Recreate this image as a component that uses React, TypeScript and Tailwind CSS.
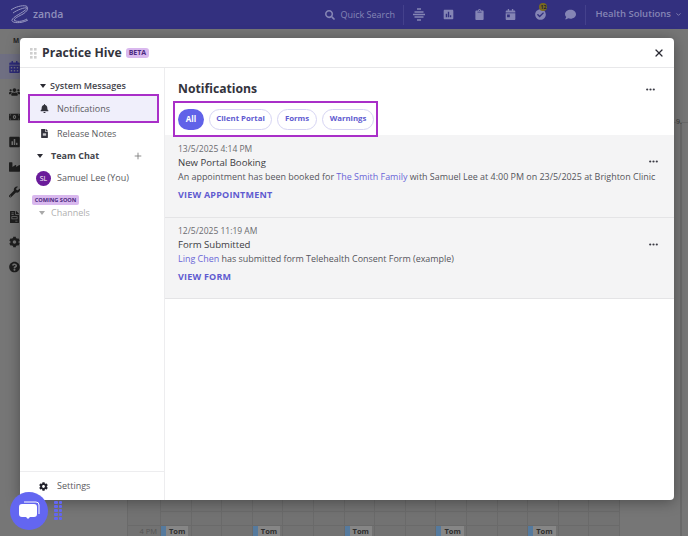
import React from "react";
import { Plus, X, ChevronDown } from "lucide-react";
import {
  FaSearch, FaBell, FaFileAlt, FaCog, FaCalendarAlt, FaUsers, FaMoneyBillAlt, FaPoll, FaIndustry, FaWrench,
  FaQuestionCircle, FaClipboard, FaCalendarDay, FaCheckCircle, FaComment, FaFileInvoice,
} from "react-icons/fa";

const font = { fontFamily: '"Open Sans", sans-serif' };

function Caret({ light }: { light?: boolean }) {
  return (
    <svg width="6" height="4" viewBox="0 0 6 4" className="shrink-0">
      <path d="M0 0h6L3 4z" fill={light ? "#a9a9a9" : "#2b2b33"} />
    </svg>
  );
}

function Dots() {
  return (
    <svg width="9" height="3" viewBox="0 0 9 3">
      <circle cx="1.2" cy="1.5" r="1.1" fill="#3a3a44" />
      <circle cx="4.5" cy="1.5" r="1.1" fill="#3a3a44" />
      <circle cx="7.8" cy="1.5" r="1.1" fill="#3a3a44" />
    </svg>
  );
}

function Grip() {
  return (
    <svg width="7" height="11" viewBox="0 0 7 11" fill="#cfcfcf">
      <rect x="0" y="0" width="2.6" height="2.6" />
      <rect x="4" y="0" width="2.6" height="2.6" />
      <rect x="0" y="4" width="2.6" height="2.6" />
      <rect x="4" y="4" width="2.6" height="2.6" />
      <rect x="0" y="8" width="2.6" height="2.6" />
      <rect x="4" y="8" width="2.6" height="2.6" />
    </svg>
  );
}

function Pill({ label, active, width }: { label: string; active?: boolean; width: string }) {
  return (
    <div
      className={
        (active
          ? "bg-[#6062e8] text-white text-[8px] "
          : "border border-[#d6d4f3] bg-white text-[#5f5bd0] text-[7.8px] ") +
        "h-[21px] rounded-full font-bold flex items-center justify-center whitespace-nowrap shrink-0 " +
        width
      }
    >
      {label}
    </div>
  );
}

function Notice({ time, title, body, action, box }: { time: string; title: string; body: React.ReactNode; action: string; box: string }) {
  return (
    <div className={"relative bg-[#f4f4f5] border-b border-[#e4e4e6] pl-[13px] " + box}>
      <div className="text-[8.5px] leading-[13px] text-[#6b6b70]">{time}</div>
      <div className="text-[9.6px] leading-[15px] text-[#3c3c42]">{title}</div>
      <div className="text-[8.95px] leading-[13px] text-[#55555b] whitespace-nowrap">{body}</div>
      <div className="text-[9px] leading-[13px] mt-[5px] font-bold tracking-[0.2px] text-[#5f5bd0]">{action}</div>
      <div className="absolute right-[16px] top-[25px] flex">
        <Dots />
      </div>
    </div>
  );
}

function NavIcon({ children }: { children: React.ReactNode }) {
  return <div className="h-[25px] flex items-center pl-[9px] text-[#1f1f1f]">{children}</div>;
}

export default function App() {
  return (
    <div style={font} className="relative w-[688px] h-[536px] overflow-hidden bg-[#767676]">
      <header className="h-[29px] bg-[#33307f] flex items-center text-[#8585b5]">
        <svg width="24" height="22" viewBox="0 0 24 22" className="ml-[8px]" fill="none" stroke="#9898c2" strokeWidth="1">
          <path d="M3 6c4-3 11-5 15-4 3 1 1 3-2 5-4 3-11 6-12 9-1 3 9 4 16 0" />
          <path d="M5 9c4-3 12-6 14-5 2 1-1 4-4 6-4 2-8 4-9 6 2 2 8 2 13-1" />
        </svg>
        <span className="ml-[1px] text-[10.5px] font-semibold text-[#8f8fbb]">zanda</span>
        <div className="ml-auto flex items-center">
          <FaSearch size={10} />
          <span className="text-[9px] ml-[5px] w-[54px] whitespace-nowrap">Quick Search</span>
          <div className="w-px h-[20px] bg-[#44418c] ml-[9px]" />
          <svg width="12" height="13" viewBox="0 0 12 13" className="ml-[9px]" fill="none" stroke="#8585b5" strokeWidth="1.3">
            <path d="M4 1h4M1.5 4h9M0 6.5h12M1.5 9h9M4 12h4" />
          </svg>
          <span className="ml-[18px]"><FaPoll size={11} /></span>
          <span className="ml-[20px]"><FaClipboard size={11} /></span>
          <span className="ml-[20px]"><FaCalendarDay size={11} /></span>
          <div className="relative ml-[19px]">
            <FaCheckCircle size={11} />
            <div className="absolute -top-[6px] left-[4px] w-[8px] h-[8px] rounded-full bg-[#7a6a1e] text-[5px] leading-[8px] text-center text-[#1c1c3c] font-bold">12</div>
          </div>
          <span className="ml-[19px]"><FaComment size={11} /></span>
          <div className="w-px h-[20px] bg-[#44418c] ml-[9px]" />
          <span className="ml-[9px] text-[9.5px] font-semibold whitespace-nowrap">Health Solutions</span>
          <ChevronDown size={7} strokeWidth={3} className="ml-[4px] mr-[6px]" />
        </div>
      </header>

      <div className="absolute left-0 top-[29px] w-[20px] flex flex-col">
        <div className="h-[25px] text-[6.5px] font-bold text-[#1f1f1f] pl-[13px] pt-[6px] leading-[12px]">M</div>
        <div className="h-[25px] bg-[#6f6f82] flex items-center pl-[9px] text-[#2c2a78]">
          <FaCalendarAlt size={12} />
        </div>
        <NavIcon><FaUsers size={12} /></NavIcon>
        <NavIcon><FaMoneyBillAlt size={12} /></NavIcon>
        <NavIcon><FaPoll size={12} /></NavIcon>
        <NavIcon><FaIndustry size={12} /></NavIcon>
        <NavIcon><FaWrench size={12} /></NavIcon>
        <NavIcon><FaFileInvoice size={12} /></NavIcon>
        <NavIcon><FaCog size={12} /></NavIcon>
        <NavIcon><FaQuestionCircle size={12} /></NavIcon>
      </div>

      <div className="absolute right-0 top-[122px] bottom-0 w-[14px] border-t border-[#6a6a6a]">
        <div className="absolute left-[6px] top-0 bottom-0 w-[2px] bg-[#696969]" />
        <div className="absolute left-[2px] -top-[6px] text-[7px] leading-[10px] text-[#333]">9.</div>
      </div>

      <div className="absolute left-[127px] top-[500px] right-[68px] bottom-0 grid grid-cols-[33px_repeat(15,1fr)] grid-rows-[12px_14px_10px] border-l border-[#6a6a6a] bg-[#727272]">
        {Array.from({ length: 16 }).map((_, i) => (
          <div key={"a" + i} className={i === 0 ? "border-r border-[#6a6a6a]" : "border-r border-b border-[#6a6a6a]"} />
        ))}
        {Array.from({ length: 16 }).map((_, i) => (
          <div key={i} className="border-r border-b border-[#6a6a6a]" />
        ))}
        {Array.from({ length: 16 }).map((_, i) => (
          <div key={"r" + i} className="border-r border-[#6a6a6a] relative text-[7.5px] leading-[10px] text-[#2e2e2e] whitespace-nowrap">
            {i === 0 && <span className="absolute right-[3px] top-0 text-[#555]">4 PM</span>}
            {(i - 1) % 3 === 0 && (
              <span className="absolute left-0 top-0 flex h-[10px] items-center">
                <span className="w-[5px] h-[10px] bg-[#557a9e]" />
                <span className="bg-[#868686] px-[3px] font-bold leading-[10px]">Tom</span>
              </span>
            )}
          </div>
        ))}
      </div>

      <section className="absolute left-[20px] top-[38px] w-[654px] h-[462px] bg-white rounded-[4px] flex flex-col shadow-[0_2px_14px_rgba(0,0,0,0.35)] text-[#333]">
        <div className="h-[30px] pt-[1px] border-b border-[#e8e8ea] flex items-center shrink-0">
          <span className="ml-[10px] flex"><Grip /></span>
          <span className="ml-[5px] text-[12.2px] font-bold text-[#33333c]">Practice Hive</span>
          <span className="ml-[4px] h-[10px] px-[3px] rounded-[3px] bg-[#d9b8ee] text-[7px] font-bold leading-[10px] text-[#4b2a80]">BETA</span>
          <X size={12} strokeWidth={2.4} className="ml-auto mr-[9px] text-[#2a2a33]" />
        </div>
        <div className="flex-1 flex min-h-0">
          <aside className="w-[145px] border-r border-[#ededef] flex flex-col shrink-0">
            <div className="h-[16px] mt-[10px] flex items-center pl-[20px] gap-[4px] text-[9px] font-semibold text-[#44444c]">
              <Caret />
              System Messages
            </div>
            <div className="ml-[8px] h-[29px] w-[131px] border-2 border-[#a92fc8] bg-[#f0effb] flex items-center pl-[10px] text-[#5a5a60] text-[9px]">
              <FaBell size={9} className="text-[#33333c] mr-[8px]" />
              Notifications
            </div>
            <div className="h-[21px] flex items-center pl-[20px] text-[9px] text-[#5a5a60]">
              <FaFileAlt size={9} className="text-[#33333c] mr-[8px]" />
              Release Notes
            </div>
            <div className="h-[16px] mt-[4px] flex items-center pl-[17px] pr-[21px] gap-[8px] text-[9px] font-bold text-[#44444c]">
              <Caret />
              Team Chat
              <Plus size={10} className="ml-auto text-[#777]" />
            </div>
            <div className="mt-[6px] h-[16px] flex items-center pl-[16px] text-[9px] text-[#5a5a60]">
              <span className="w-[15px] h-[15px] rounded-full bg-[#6a1b9a] text-white text-[7px] leading-[15px] text-center mr-[6px]">SL</span>
              Samuel Lee (You)
            </div>
            <div className="mt-[9px] ml-[12px] w-[47px] h-[10px] rounded-[2px] bg-[#d9b8ee] text-[5.6px] font-bold leading-[10px] text-center whitespace-nowrap text-[#4b2a80]">COMING SOON</div>
            <div className="mt-[2px] h-[12px] flex items-center pl-[19px] gap-[6px] text-[9px] text-[#b0b0b0]">
              <Caret light />
              Channels
            </div>
            <div className="mt-auto h-[29px] border-t border-[#ededef] flex items-center pl-[19px] text-[9px] text-[#5a5a60]">
              <FaCog size={9} className="text-[#22222c] mr-[9px]" />
              Settings
            </div>
          </aside>
          <main className="flex-1 min-w-0 flex flex-col">
            <div className="flex items-center h-[17px] mt-[13px] pl-[13px] pr-[19px]">
              <h1 className="text-[12.2px] font-bold text-[#33333c]">Notifications</h1>
              <div className="ml-auto flex"><Dots /></div>
            </div>
            <div className="relative z-10 ml-[8px] mt-[3px] w-[205px] h-[36px] border-2 border-[#a92fc8] flex items-center gap-[5px] pl-[3px]">
              <Pill label="All" active width="w-[26px]" />
              <Pill label="Client Portal" width="w-[63px]" />
              <Pill label="Forms" width="w-[40px]" />
              <Pill label="Warnings" width="w-[52px]" />
            </div>
            <div className="-mt-[2px] flex flex-col">
              <Notice
                box="h-[83px] pt-[7px]"
                time="13/5/2025 4:14 PM"
                title="New Portal Booking"
                action="VIEW APPOINTMENT"
                body={<>An appointment has been booked for <span className="text-[#6a66d8]">The Smith Family</span> with Samuel Lee at 4:00 PM on 23/5/2025 at Brighton Clinic</>}
              />
              <Notice
                box="h-[81px] pt-[6px]"
                time="12/5/2025 11:19 AM"
                title="Form Submitted"
                action="VIEW FORM"
                body={<><span className="text-[#6a66d8]">Ling Chen</span> has submitted form Telehealth Consent Form (example)</>}
              />
            </div>
          </main>
        </div>
      </section>

      <div className="absolute left-[10px] top-[492px] w-[38px] h-[38px] rounded-full bg-[#6366f1] flex items-center justify-center">
        <svg width="22" height="20" viewBox="0 0 22 20">
          <path d="M6 1h12a3 3 0 0 1 3 3v9" fill="none" stroke="#fff" strokeWidth="1" />
          <path d="M4 3h12a3 3 0 0 1 3 3v7a3 3 0 0 1-3 3h-4l-2 2-2-2H4a3 3 0 0 1-3-3V6a3 3 0 0 1 3-3z" fill="#fff" />
        </svg>
      </div>
      <div className="absolute left-[54px] top-[501px] w-[8px] grid grid-cols-2 gap-[1px]">
        {Array.from({ length: 10 }).map((_, i) => (
          <span key={i} className="h-[3px] bg-[#6366f1] rounded-[1px]" />
        ))}
      </div>
    </div>
  );
}
